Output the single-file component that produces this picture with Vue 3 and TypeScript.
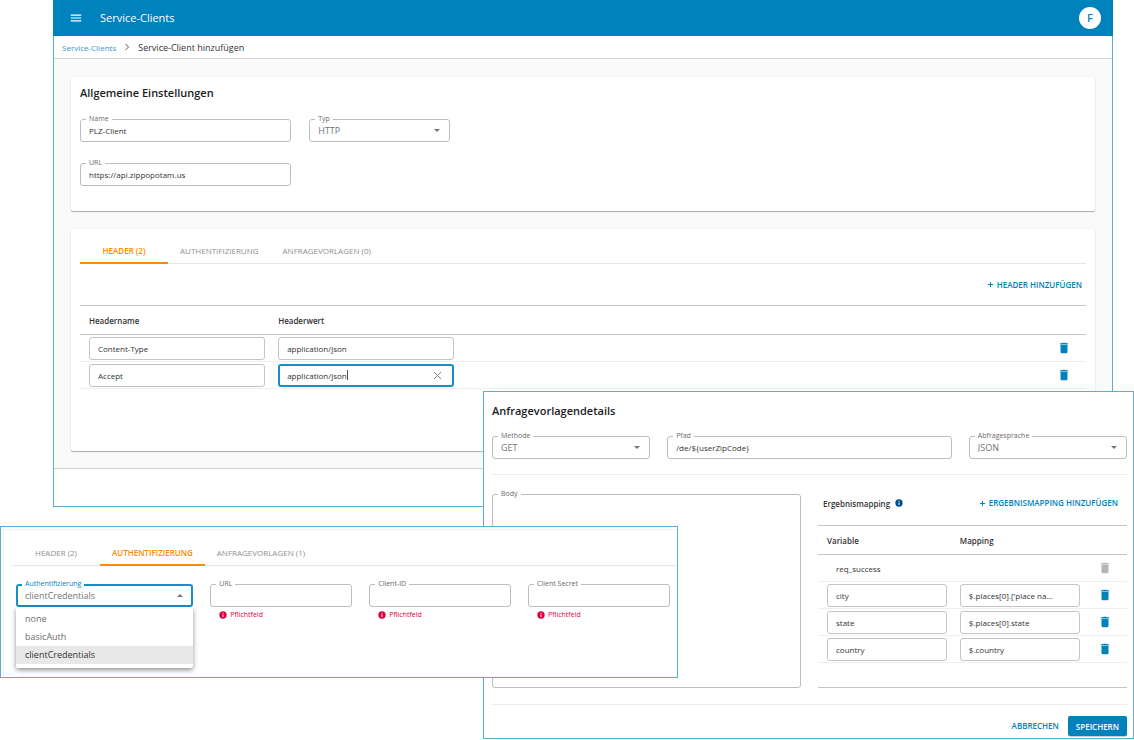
<script setup lang="ts">
import { ref } from 'vue'

interface HeaderRow {
  name: string
  value: string
  active: boolean
}

interface MappingRow {
  variable: string
  mapping: string
  fixed: boolean
}

const client = ref({ name: 'PLZ-Client', type: 'HTTP', url: 'https://api.zippopotam.us' })

const headerTabs = ['Header (2)', 'Authentifizierung', 'Anfragevorlagen (0)']
const authTabs = ['Header (2)', 'Authentifizierung', 'Anfragevorlagen (1)']

const headers = ref<HeaderRow[]>([
  { name: 'Content-Type', value: 'application/json', active: false },
  { name: 'Accept', value: 'application/json', active: true },
])

const request = ref({ method: 'GET', path: '/de/${userZipCode}', language: 'JSON', body: '' })

const mappings = ref<MappingRow[]>([
  { variable: 'req_success', mapping: '', fixed: true },
  { variable: 'city', mapping: "$.places[0].['place name']", fixed: false },
  { variable: 'state', mapping: '$.places[0].state', fixed: false },
  { variable: 'country', mapping: '$.country', fixed: false },
])

const authOptions = ['none', 'basicAuth', 'clientCredentials']
const authType = ref('clientCredentials')

const requiredFields = ref([
  { id: 'auth-url', label: 'URL', value: '' },
  { id: 'auth-id', label: 'Client-ID', value: '' },
  { id: 'auth-secret', label: 'Client Secret', value: '' },
])

const trashPath =
  'M6 19c0 1.1.9 2 2 2h8c1.1 0 2-.9 2-2V7H6v12zM19 4h-3.5l-1-1h-5l-1 1H5v2h14V4z'
const plusPath = 'M19 13.2h-5.8V19h-2.4v-5.8H5v-2.4h5.8V5h2.4v5.8H19z'
const infoPath =
  'M12 1a11 11 0 1 0 0 22 11 11 0 0 0 0-22zm1.5 17h-3v-7.500h3zm0-9.500h-3v-3h3z'
</script>

<template>
  <div class="stage">
    <main class="window client">
      <header class="topbar">
        <button class="icon-btn" type="button" aria-label="Menü">
          <svg class="menu-icon" viewBox="0 0 24 24"><path d="M3 18h18v-2H3v2zm0-5h18v-2H3v2zm0-7v2h18V6H3z" /></svg>
        </button>
        <h1>Service-Clients</h1>
        <button class="avatar" type="button">F</button>
      </header>

      <nav class="crumbs" aria-label="Brotkrumen">
        <a href="#">Service-Clients</a>
        <svg class="chevron" viewBox="0 0 8 8"><path d="M2.500 1l3 3-3 3" /></svg>
        <span>Service-Client hinzufügen</span>
      </nav>

      <div class="content">
        <section class="card general">
          <h2>Allgemeine Einstellungen</h2>
          <div class="general-grid">
            <div class="field">
              <label for="client-name">Name</label>
              <input id="client-name" v-model="client.name" type="text" />
            </div>
            <div class="field">
              <label for="client-type">Typ</label>
              <select id="client-type" v-model="client.type">
                <option>HTTP</option>
              </select>
              <svg class="arrow" viewBox="0 0 6 4"><path d="M0 0h6L3 3z" /></svg>
            </div>
            <div class="field">
              <label for="client-url">URL</label>
              <input id="client-url" v-model="client.url" type="text" />
            </div>
          </div>
        </section>

        <section class="card headers">
          <div class="tabs">
            <button v-for="(tab, i) in headerTabs" :key="tab" type="button" :class="{ active: i === 0 }">{{ tab }}</button>
          </div>
          <div class="toolbar">
            <button class="text-btn" type="button">
              <svg class="plus" viewBox="0 0 24 24"><path :d="plusPath" /></svg>Header hinzufügen
            </button>
          </div>
          <table>
            <colgroup><col class="w19" /><col class="w19" /><col /><col class="act" /></colgroup>
            <thead>
              <tr><th>Headername</th><th>Headerwert</th><th></th><th></th></tr>
            </thead>
            <tbody>
              <tr v-for="row in headers" :key="row.name">
                <td><input v-model="row.name" class="cell" type="text" aria-label="Headername" /></td>
                <td>
                  <div v-if="row.active" class="cell editing">
                    <input v-model="row.value" type="text" aria-label="Headerwert" />
                    <span class="caret"></span>
                    <button class="icon-btn clear" type="button" aria-label="Leeren">
                      <svg viewBox="0 0 10 10"><path d="M1 1l8 8M9 1l-8 8" /></svg>
                    </button>
                  </div>
                  <input v-else v-model="row.value" class="cell" type="text" aria-label="Headerwert" />
                </td>
                <td></td>
                <td class="action">
                  <button class="icon-btn" type="button" aria-label="Löschen">
                    <svg class="trash" viewBox="0 0 24 24"><path :d="trashPath" /></svg>
                  </button>
                </td>
              </tr>
            </tbody>
          </table>
        </section>
      </div>
      <footer class="client-footer"></footer>
    </main>

    <section class="window details">
      <h2>Anfragevorlagendetails</h2>
      <div class="details-fields">
        <div class="field">
          <label for="req-method">Methode</label>
          <select id="req-method" v-model="request.method">
            <option>GET</option>
          </select>
          <svg class="arrow" viewBox="0 0 6 4"><path d="M0 0h6L3 3z" /></svg>
        </div>
        <div class="field">
          <label for="req-path">Pfad</label>
          <input id="req-path" v-model="request.path" type="text" />
        </div>
        <div class="field">
          <label for="req-lang">Abfragesprache</label>
          <select id="req-lang" v-model="request.language">
            <option>JSON</option>
          </select>
          <svg class="arrow" viewBox="0 0 6 4"><path d="M0 0h6L3 3z" /></svg>
        </div>
      </div>

      <div class="details-body">
        <div class="field body-field">
          <label for="req-body">Body</label>
          <textarea id="req-body" v-model="request.body"></textarea>
        </div>
        <div class="mapping">
          <div class="mapping-head">
            <h3>Ergebnismapping</h3>
            <svg class="info" viewBox="0 0 24 24"><path :d="infoPath" /></svg>
            <button class="text-btn" type="button">
              <svg class="plus" viewBox="0 0 24 24"><path :d="plusPath" /></svg>Ergebnismapping hinzufügen
            </button>
          </div>
          <div class="mapping-table">
            <table>
              <colgroup><col class="w43" /><col class="w43" /><col /></colgroup>
              <thead>
                <tr><th>Variable</th><th>Mapping</th><th></th></tr>
              </thead>
              <tbody>
                <tr v-for="row in mappings" :key="row.variable">
                  <td>
                    <span v-if="row.fixed" class="cell plain">{{ row.variable }}</span>
                    <input v-else v-model="row.variable" class="cell" type="text" aria-label="Variable" />
                  </td>
                  <td>
                    <input v-if="!row.fixed" v-model="row.mapping" class="cell clipped" type="text" aria-label="Mapping" />
                  </td>
                  <td class="action">
                    <button class="icon-btn" type="button" aria-label="Löschen" :disabled="row.fixed">
                      <svg class="trash" viewBox="0 0 24 24"><path :d="trashPath" /></svg>
                    </button>
                  </td>
                </tr>
              </tbody>
            </table>
          </div>
        </div>
      </div>

      <footer class="details-footer">
        <button class="text-btn" type="button">Abbrechen</button>
        <button class="primary-btn" type="button">Speichern</button>
      </footer>
    </section>

    <section class="window auth">
      <div class="auth-card">
        <div class="tabs">
          <button v-for="(tab, i) in authTabs" :key="tab" type="button" :class="{ active: i === 1 }">{{ tab }}</button>
        </div>
        <div class="auth-fields">
          <div class="field focused">
            <label for="auth-type">Authentifizierung</label>
            <select id="auth-type" v-model="authType">
              <option v-for="option in authOptions" :key="option">{{ option }}</option>
            </select>
            <svg class="arrow" viewBox="0 0 6 4"><path d="M0 3h6L3 0z" /></svg>
            <ul class="menu" role="listbox">
              <li
                v-for="option in authOptions"
                :key="option"
                role="option"
                :aria-selected="option === authType"
                :class="{ selected: option === authType }"
                @click="authType = option"
              >{{ option }}</li>
            </ul>
          </div>
          <div v-for="f in requiredFields" :key="f.id">
            <div class="field">
              <label :for="f.id">{{ f.label }}</label>
              <input :id="f.id" v-model="f.value" type="text" />
            </div>
            <p class="error">
              <svg class="info" viewBox="0 0 24 24"><path :d="infoPath" /></svg>Pflichtfeld
            </p>
          </div>
        </div>
      </div>
    </section>
  </div>
</template>

<style>
body {
  background: #fff;
}
</style>

<style scoped>
.stage,
.stage * {
  box-sizing: border-box;
}

.stage {
  position: relative;
  min-height: 100vh;
  padding: 0 21px 0 53px;
  overflow: hidden;
  font-family: "Open Sans", "Noto Sans", sans-serif;
  font-size: 8px;
  color: #333;
}

h1, h2, h3, p, ul {
  margin: 0;
  padding: 0;
}

button, input, select, textarea {
  margin: 0;
  font: inherit;
  color: inherit;
  outline: none;
}

button {
  padding: 0;
  border: 0;
  background: none;
  cursor: pointer;
}

svg {
  display: block;
  flex: none;
  fill: currentColor;
}

h2 {
  font-size: 11px;
  line-height: 16px;
  font-weight: 600;
  color: #1c1c1c;
}

.window {
  border: 1px solid #5badd4;
  background: #fff;
}

.client {
  border-top: 0;
}

.topbar {
  display: flex;
  align-items: center;
  height: 36px;
  margin: 0 -1px;
  padding: 0 12px 0 16px;
  background: #0082bc;
  color: #fff;
}

.topbar h1 {
  flex: 1;
  margin-left: 17px;
  font-size: 11px;
  line-height: 16px;
  font-weight: 500;
}

.menu-icon {
  width: 14px;
  height: 14px;
}

.avatar {
  width: 22px;
  height: 22px;
  border-radius: 50%;
  background: #fff;
  color: #0082bc;
  font-size: 11px;
  line-height: 22px;
  font-weight: 600;
}

.crumbs {
  display: flex;
  align-items: center;
  gap: 7px;
  height: 23px;
  padding: 0 8px;
  border-bottom: 1px solid #d4d4d4;
  font-size: 9px;
}

.crumbs a {
  color: #3c95cb;
  font-size: 8px;
  text-decoration: none;
}

.chevron {
  width: 8px;
  height: 8px;
  fill: none;
  stroke: #555;
}

.content {
  display: flex;
  flex-direction: column;
  gap: 18px;
  padding: 18px 17px 17px;
  background: #fafafa;
}

.card {
  padding: 8px 9px;
  border-radius: 2px;
  background: #fff;
  box-shadow: 0 1px 1px rgba(0, 0, 0, 0.3), 0 0 2px rgba(0, 0, 0, 0.08);
}

.general {
  padding-bottom: 25px;
}

.general-grid {
  display: grid;
  grid-template-columns: 21% 14%;
  gap: 21px 18px;
  margin-top: 18px;
}

.field {
  position: relative;
  height: 23px;
}

.field label {
  position: absolute;
  top: -5px;
  left: 6px;
  padding: 0 3px;
  background: #fff;
  color: #6b6b6b;
  font-size: 7px;
  line-height: 10px;
}

.field input,
.field select,
.field textarea {
  display: block;
  width: 100%;
  height: 100%;
  padding: 0 8px;
  border: 1px solid #bdbdbd;
  border-radius: 3px;
  background: #fff;
}

.field select {
  appearance: none;
  color: #757575;
  font-size: 9px;
}

.field textarea {
  resize: none;
}

.arrow {
  position: absolute;
  top: 10px;
  right: 10px;
  width: 6px;
  height: 4px;
  color: #757575;
}

.focused label {
  color: #0082bc;
}

.field.focused select {
  border: 2px solid #1a8fc6;
  padding: 0 7px;
}

.headers {
  min-height: 222px;
}

.tabs {
  display: flex;
  height: 27px;
  border-bottom: 1px solid #e6e6e6;
}

.tabs button {
  min-width: 88px;
  height: 27px;
  padding: 2px 12px 0;
  border-bottom: 2px solid transparent;
  color: #8f8f8f;
  font-size: 8px;
  font-weight: 500;
  text-transform: uppercase;
}

.tabs .active {
  border-bottom-color: #ff8a00;
  color: #ff8a00;
  font-weight: 600;
}

.toolbar {
  display: flex;
  align-items: center;
  justify-content: flex-end;
  height: 41px;
  padding-right: 4px;
}

.text-btn {
  display: flex;
  align-items: center;
  gap: 2px;
  color: #0082bc;
  font-size: 8px;
  line-height: 16px;
  font-weight: 600;
  text-transform: uppercase;
}

.plus {
  width: 9px;
  height: 9px;
}

table {
  width: 100%;
  table-layout: fixed;
  border-collapse: separate;
  border-spacing: 0;
  border-top: 1px solid #c4c4c4;
}

.w19 {
  width: 18.8%;
}

.w43 {
  width: 43%;
}

.act {
  width: 44px;
}

th {
  height: 29px;
  padding: 0 9px;
  border-bottom: 1px solid #c4c4c4;
  font-size: 8px;
  font-weight: 600;
  text-align: left;
}

td {
  height: 27px;
  padding: 0 4px 0 9px;
  border-bottom: 1px solid #efefef;
}

td.action {
  padding: 0;
}

.action .icon-btn {
  display: block;
  margin: 0 auto;
  color: #0082bc;
}

.action .icon-btn:disabled {
  color: #b5b5b5;
}

.trash {
  width: 14px;
  height: 14px;
}

.cell {
  display: block;
  width: 100%;
  height: 23px;
  padding: 0 8px;
  border: 1px solid #c4c4c4;
  border-radius: 3px;
  background: #fff;
}

.clipped {
  padding-right: 22px;
  text-overflow: ellipsis;
}

.plain {
  border-color: transparent;
  background: none;
  line-height: 21px;
}

.editing {
  display: flex;
  align-items: center;
  border: 2px solid #1a8fc6;
  padding: 0 10px 0 7px;
}

.editing input {
  field-sizing: content;
  min-width: 0;
  padding: 0;
  border: 0;
  background: none;
}

.caret {
  width: 1px;
  height: 10px;
  background: #555;
}

.clear {
  margin-left: auto;
}

.clear svg {
  width: 9px;
  height: 9px;
  fill: none;
  stroke: #777;
}

.client-footer {
  height: 38px;
  border-top: 1px solid #d4d4d4;
}

.details {
  position: absolute;
  top: 391px;
  left: 483px;
  right: 0;
  padding: 11px 6px 2px 8px;
}

.details-fields {
  display: grid;
  grid-template-columns: 5fr 9fr 5fr;
  gap: 17px;
  margin-top: 17px;
  padding-bottom: 15px;
  border-bottom: 1px solid #ededed;
}

.details-body {
  display: grid;
  grid-template-columns: 1fr 1fr;
  gap: 17px;
  min-height: 194px;
  margin: 19px 0 16px;
}

.body-field {
  height: auto;
}

.mapping {
  display: flex;
  flex-direction: column;
}

.mapping-head {
  display: flex;
  align-items: center;
  height: 18px;
  margin-bottom: 13px;
  padding: 0 9px 0 5px;
}

.mapping-head h3 {
  font-size: 8px;
  font-weight: 600;
}

.mapping-head .text-btn {
  margin-left: auto;
}

.info {
  width: 8px;
  height: 8px;
}

.mapping-head .info {
  margin-left: 5px;
  color: #004f8b;
}

.mapping-table {
  flex: 1;
  border-bottom: 1px solid #c4c4c4;
}

.details-footer {
  display: flex;
  align-items: center;
  justify-content: flex-end;
  gap: 9px;
  padding-top: 11px;
  border-top: 1px solid #ededed;
}

.primary-btn {
  height: 20px;
  padding: 0 8px;
  border-radius: 2px;
  background: #0082bc;
  box-shadow: 0 1px 1px rgba(0, 0, 0, 0.2);
  color: #fff;
  font-size: 8px;
  font-weight: 600;
  text-transform: uppercase;
}

.auth {
  position: absolute;
  top: 526px;
  left: 0;
  right: 456px;
  padding: 2px 0 0 2px;
}

.auth-card {
  min-height: 148px;
  padding: 9px 0 0 8px;
  border-top: 1px solid #f0f0f0;
  border-left: 1px solid #f5f5f5;
}

.auth-fields {
  display: grid;
  grid-template-columns: 5fr 4fr 4fr 4fr;
  gap: 17px;
  padding: 18px 7px 0 4px;
}

.error {
  display: flex;
  align-items: center;
  gap: 3px;
  margin-top: 2px;
  padding-left: 9px;
  color: #e0003c;
  font-size: 7px;
  line-height: 12px;
}

.menu {
  position: absolute;
  top: 23px;
  left: 0;
  right: 0;
  padding: 3px 0 4px;
  border-radius: 2px;
  background: #fff;
  box-shadow: 0 2px 5px rgba(0, 0, 0, 0.45);
  list-style: none;
}

.menu li {
  padding: 0 9px;
  color: #6e6e6e;
  font-size: 9px;
  line-height: 18px;
}

.menu .selected {
  background: #e8e8e8;
  color: #333;
}
</style>
